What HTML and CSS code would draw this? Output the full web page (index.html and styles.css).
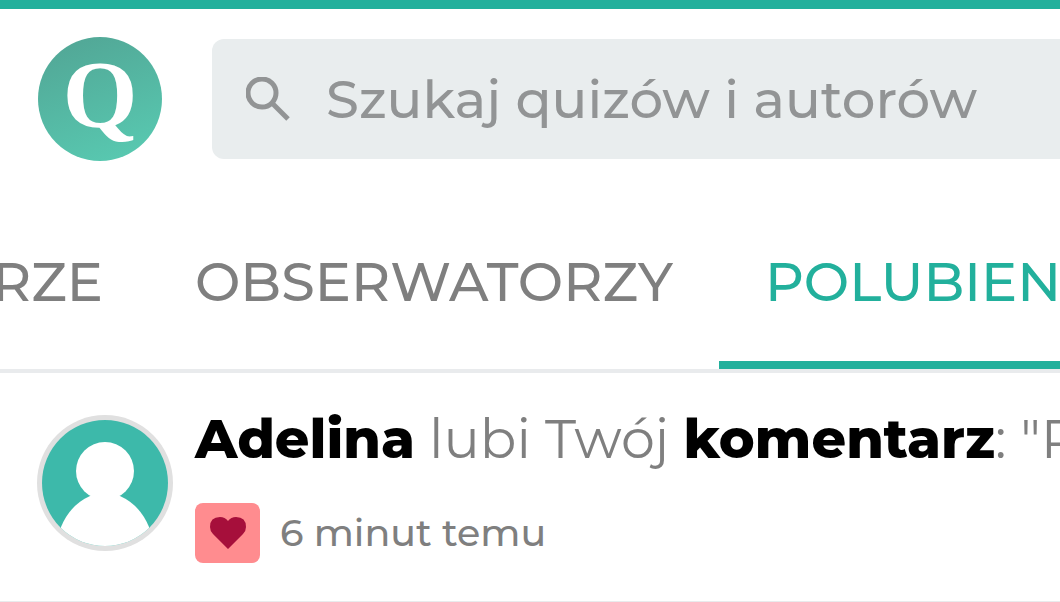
FILE: index.html
```html
<!DOCTYPE html>
<html lang="pl">
<head>
  <meta charset="UTF-8">
  <meta name="viewport" content="width=device-width, initial-scale=1">
  <title>Polubienia</title>
  <link rel="stylesheet" href="styles.css">
</head>
<body>
  <header class="header">
    <a class="logo" href="#">Q</a>
    <form class="search">
      <svg class="search-icon" viewBox="0 0 44 44" aria-hidden="true">
        <circle cx="16" cy="16" r="14"/>
        <path d="M26 26 L42 42"/>
      </svg>
      <input type="search" placeholder="Szukaj quizów i autorów" aria-label="Szukaj quizów i autorów">
    </form>
  </header>

  <nav class="tabs">
    <a class="tab tab-first" href="#">RZE</a>
    <a class="tab" href="#">OBSERWATORZY</a>
    <a class="tab active" href="#">POLUBIENI</a>
  </nav>

  <main>
    <article class="notice">
      <svg class="avatar" viewBox="0 0 136 136" aria-hidden="true">
        <defs>
          <clipPath id="face"><circle cx="68" cy="68" r="63"/></clipPath>
        </defs>
        <circle cx="68" cy="68" r="68" fill="#e0e0e0"/>
        <g clip-path="url(#face)">
          <rect width="136" height="136" fill="#3db9aa"/>
          <circle cx="68" cy="56" r="29" fill="#fff"/>
          <path d="M53 81 H83 Q103 90 112 112 V136 H24 V112 Q33 90 53 81 Z" fill="#fff"/>
        </g>
      </svg>
      <div class="notice-body">
        <p class="notice-text"><b>Adelina</b> lubi Twój <b>komentarz</b>: "P</p>
        <div class="notice-meta">
          <span class="badge">
            <svg class="heart" viewBox="0 0 36 32" aria-hidden="true">
              <path d="M18 32 L3 17 Q0 14 0 10 Q0 0 10 0 Q15 0 18 4 Q21 0 26 0 Q36 0 36 10 Q36 14 33 17 Z"/>
            </svg>
          </span>
          <time>6 minut temu</time>
        </div>
      </div>
    </article>
  </main>
</body>
</html>
```
FILE: styles.css
```css
* {
  box-sizing: border-box;
}
body {
  margin: 0;
  font-family: Montserrat, Inter, sans-serif;
  font-size: 54px;
  font-weight: 500;
  color: #7f7f7f;
  background: #fff;
  border-top: 9px solid #22b09c;
}
a {
  color: inherit;
  text-decoration: none;
}
.header {
  display: flex;
  align-items: center;
  gap: 50px;
  padding: 28px 0 28px 38px;
}
.logo {
  flex: none;
  width: 124px;
  height: 124px;
  border-radius: 50%;
  background: linear-gradient(160deg, #52a897 10%, #58c8b0 90%);
  color: #fff;
  font: bold 96px/116px "Liberation Serif", serif;
  text-align: center;
}
.search {
  flex: 1;
  display: flex;
  align-items: center;
  gap: 36px;
  height: 120px;
  padding-left: 34px;
  border-radius: 12px 0 0 12px;
  background: #e9edee;
}
.search-icon {
  flex: none;
  width: 44px;
  height: 44px;
  fill: none;
  stroke: #929495;
  stroke-width: 5;
}
.search input {
  flex: 1;
  min-width: 0;
  padding: 0;
  border: 0;
  outline: 0;
  background: none;
  font: inherit;
  font-size: 53px;
  color: #555;
}
.search input::placeholder {
  color: #929495;
  opacity: 1;
}
.tabs {
  display: flex;
  border-bottom: 4px solid #e9ebed;
  overflow: hidden;
}
.tab {
  flex: none;
  height: 180px;
  padding: 0 46px;
  border-bottom: 8px solid transparent;
  line-height: 186px;
}
/* scrolled partly out of view on the left */
.tab-first {
  display: flex;
  justify-content: flex-end;
  width: 149px;
  padding-left: 0;
}
.tab.active {
  color: #22b09c;
  border-color: #22b09c;
}
.notice {
  display: flex;
  gap: 22px;
  padding: 34px 0 38px 37px;
  border-bottom: 2px solid #e9ebed;
  overflow: hidden;
}
.avatar {
  flex: none;
  width: 136px;
  height: 136px;
  margin-top: 8px;
}
.notice-text {
  margin: 0;
  font-weight: 400;
  line-height: 64px;
  white-space: nowrap;
}
.notice-text b {
  font-weight: 800;
  color: #000;
}
.notice-meta {
  display: flex;
  align-items: center;
  gap: 20px;
  margin-top: 32px;
  font-size: 38px;
  line-height: 60px;
}
.badge {
  display: flex;
  align-items: center;
  justify-content: center;
  width: 65px;
  height: 60px;
  border-radius: 8px;
  background: #ff8c8f;
}
.heart {
  width: 36px;
  height: 32px;
  fill: #a60f3b;
}
```
